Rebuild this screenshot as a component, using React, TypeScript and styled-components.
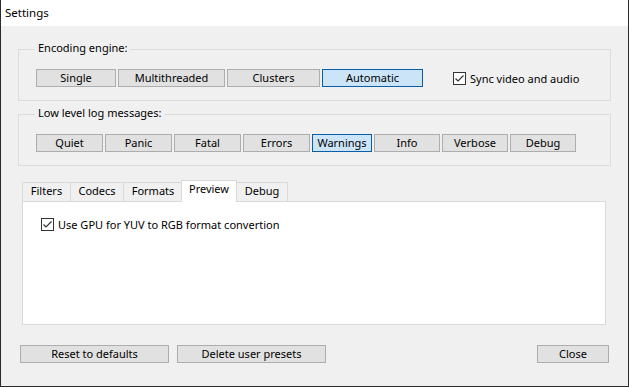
import React from "react";
import styled, { createGlobalStyle } from "styled-components";

const Global = createGlobalStyle`
  html, body { margin: 0; padding: 0; background: #ffffff; }
  body {
    font-family: "Noto Sans", "Open Sans", "DejaVu Sans", sans-serif;
    font-size: 11px;
    color: #000;
  }
  * { box-sizing: border-box; }
`;

const Window = styled.div`
  width: 629px;
  height: 387px;
  display: flex;
  flex-direction: column;
  background: #f0f0f0;
  border-left: 1px solid #2b2b2b;
  border-right: 1px solid #2b2b2b;
  border-bottom: 1px solid #2b2b2b;
`;

const TitleBar = styled.div`
  height: 26px;
  flex: none;
  background: #ffffff;
  display: flex;
  align-items: center;
  padding-left: 4px;
  padding-bottom: 1px;
  font-size: 11.5px;
`;

const Body = styled.div`
  flex: 1;
  padding: 23px 0 0 17px;
  display: flex;
  flex-direction: column;
`;

const GroupBox = styled.div<{ $mt?: number }>`
  position: relative;
  width: 593px;
  height: 52px;
  flex: none;
  border: 1px solid #dcdcdc;
  padding: 19px 0 0 17px;
  margin-top: ${(p) => p.$mt ?? 0}px;
  display: flex;
  align-items: flex-start;
`;

const GroupLabel = styled.span`
  position: absolute;
  top: -10px;
  left: 16px;
  padding: 0 3px;
  background: #f0f0f0;
  line-height: 16px;
`;

const ButtonRow = styled.div`
  display: flex;
  gap: 2px;
`;

const Btn = styled.button<{ $w: number; $active?: boolean }>`
  width: ${(p) => p.$w}px;
  height: 18px;
  padding: 0;
  margin: 0;
  font: inherit;
  color: #000;
  border: 1px solid ${(p) => (p.$active ? "#0a5ea6" : "#adadad")};
  background: ${(p) => (p.$active ? "#cce4f7" : "#e1e1e1")};
  display: flex;
  align-items: center;
  justify-content: center;
  line-height: 16px;
`;

const CheckLabel = styled.label<{ $ml?: number }>`
  display: flex;
  align-items: center;
  gap: 4px;
  margin-left: ${(p) => p.$ml ?? 0}px;
  height: 18px;
`;

const Box = styled.span`
  width: 13px;
  height: 13px;
  flex: none;
  border: 1px solid #333333;
  background: #ffffff;
  display: flex;
  align-items: center;
  justify-content: center;
`;

const Tabs = styled.div`
  margin-top: 14px;
  margin-left: 4px;
  width: 584px;
  display: flex;
  flex-direction: column;
`;

const TabStrip = styled.div`
  height: 21px;
  flex: none;
  display: flex;
  align-items: flex-end;
  position: relative;
  z-index: 1;
`;

const Tab = styled.div<{ $w: number; $sel?: boolean; $ml?: number }>`
  width: ${(p) => p.$w}px;
  height: ${(p) => (p.$sel ? 22 : 19)}px;
  margin-left: ${(p) => p.$ml ?? 0}px;
  margin-bottom: ${(p) => (p.$sel ? -1 : 0)}px;
  border: 1px solid #d9d9d9;
  border-bottom: none;
  background: ${(p) => (p.$sel ? "#ffffff" : "#f0f0f0")};
  position: relative;
  z-index: ${(p) => (p.$sel ? 2 : 1)};
  display: flex;
  align-items: center;
  justify-content: center;
  padding-bottom: ${(p) => (p.$sel ? 6 : 3)}px;
`;

const Panel = styled.div`
  height: 124px;
  flex: none;
  background: #ffffff;
  border: 1px solid #d9d9d9;
  padding: 13px 0 0 18px;
`;

const Footer = styled.div`
  margin-top: 20px;
  margin-left: 2px;
  width: 589px;
  display: flex;
  gap: 8px;
`;

const Spacer = styled.div`
  flex: 1;
`;

const Check = () => (
  <Box>
    <svg width="11" height="11" viewBox="0 0 11 11">
      <path d="M1.5 5.5 L4 8 L9.5 2.5" fill="none" stroke="#333" strokeWidth="1.2" />
    </svg>
  </Box>
);

const engines = [
  { t: "Single", w: 80 },
  { t: "Multithreaded", w: 107 },
  { t: "Clusters", w: 93 },
  { t: "Automatic", w: 101, a: true },
];

const levels = [
  { t: "Quiet", w: 67 },
  { t: "Panic", w: 67 },
  { t: "Fatal", w: 67 },
  { t: "Errors", w: 67 },
  { t: "Warnings", w: 60, a: true },
  { t: "Info", w: 66 },
  { t: "Verbose", w: 66 },
  { t: "Debug", w: 66 },
];

const tabs = [
  { t: "Filters", w: 49, ml: 0 },
  { t: "Codecs", w: 54, ml: -1 },
  { t: "Formats", w: 60, ml: -1 },
  { t: "Preview", w: 56, ml: -2, sel: true },
  { t: "Debug", w: 52, ml: -1 },
];

export default function App() {
  return (
    <>
      <Global />
      <Window>
        <TitleBar>Settings</TitleBar>
        <Body>
          <GroupBox>
            <GroupLabel>Encoding engine:</GroupLabel>
            <ButtonRow>
              {engines.map((b) => (
                <Btn key={b.t} $w={b.w} $active={b.a}>
                  {b.t}
                </Btn>
              ))}
            </ButtonRow>
            <CheckLabel $ml={30}>
              <Check />
              Sync video and audio
            </CheckLabel>
          </GroupBox>
          <GroupBox $mt={13}>
            <GroupLabel>Low level log messages:</GroupLabel>
            <ButtonRow>
              {levels.map((b) => (
                <Btn key={b.t} $w={b.w} $active={b.a}>
                  {b.t}
                </Btn>
              ))}
            </ButtonRow>
          </GroupBox>
          <Tabs>
            <TabStrip>
              {tabs.map((t) => (
                <Tab key={t.t} $w={t.w} $ml={t.ml} $sel={t.sel}>
                  {t.t}
                </Tab>
              ))}
            </TabStrip>
            <Panel>
              <CheckLabel>
                <Check />
                Use GPU for YUV to RGB format convertion
              </CheckLabel>
            </Panel>
          </Tabs>
          <Footer>
            <Btn $w={149}>Reset to defaults</Btn>
            <Btn $w={149}>Delete user presets</Btn>
            <Spacer />
            <Btn $w={72}>Close</Btn>
          </Footer>
        </Body>
      </Window>
    </>
  );
}
